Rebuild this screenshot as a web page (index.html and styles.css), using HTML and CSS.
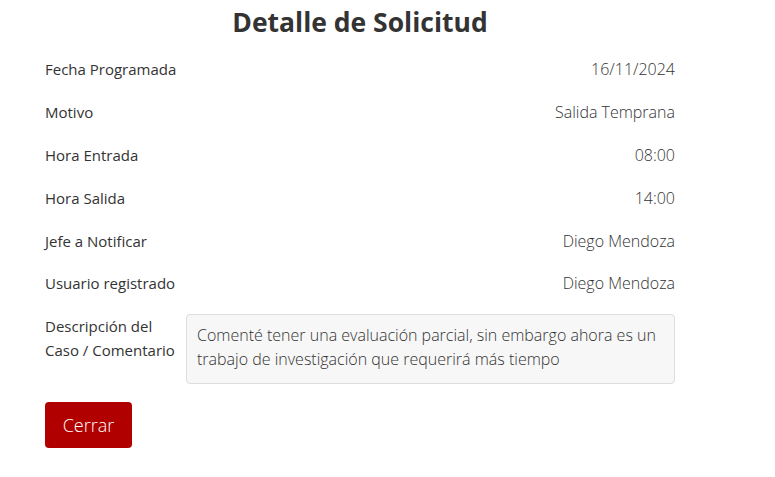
FILE: index.html
```html
<!DOCTYPE html>
<html lang="es">
<head>
<meta charset="utf-8">
<title>Detalle de Solicitud</title>
<link rel="stylesheet" href="styles.css">
</head>
<body>
<div class="panel">
  <h1 class="title">Detalle de Solicitud</h1>
  <div class="rows">
    <div class="row"><span class="label">Fecha Programada</span><span class="value">16/11/2024</span></div>
    <div class="row"><span class="label">Motivo</span><span class="value">Salida Temprana</span></div>
    <div class="row"><span class="label">Hora Entrada</span><span class="value">08:00</span></div>
    <div class="row"><span class="label">Hora Salida</span><span class="value">14:00</span></div>
    <div class="row"><span class="label">Jefe a Notificar</span><span class="value">Diego Mendoza</span></div>
    <div class="row"><span class="label">Usuario registrado</span><span class="value">Diego Mendoza</span></div>
    <div class="row desc-row">
      <span class="label desc-label">Descripción del Caso / Comentario</span>
      <div class="desc-box">Comenté tener una evaluación parcial, sin embargo ahora es un trabajo de investigación que requerirá más tiempo</div>
    </div>
  </div>
  <button class="btn-close" type="button">Cerrar</button>
</div>
</body>
</html>
```
FILE: styles.css
```css
html, body {
  margin: 0;
  padding: 0;
  background: #ffffff;
}
body {
  font-family: "Open Sans", "Noto Sans", sans-serif;
  color: #333333;
}
.panel {
  width: 630px;
  margin-left: 45px;
  padding-top: 5px;
}
.title {
  margin: 0;
  text-align: center;
  font-size: 26.5px;
  font-weight: 700;
  line-height: 34px;
  color: #333333;
}
.rows {
  display: flex;
  flex-direction: column;
  margin-top: 9px;
}
.row {
  display: flex;
  justify-content: space-between;
  align-items: center;
  height: 42.8px;
  font-size: 15px;
}
.label {
  color: #333333;
  font-weight: 400;
}
.value {
  color: #333333;
  font-weight: 300;
  font-size: 16px;
}
.desc-row {
  height: auto;
  align-items: flex-start;
  margin-top: 9px;
  gap: 8px;
}
.desc-label {
  width: 133px;
  line-height: 24px;
  flex-shrink: 0;
}
.desc-box {
  flex: 1;
  background: #f7f7f7;
  border: 1px solid #dddddd;
  border-radius: 4px;
  padding: 8px 10px;
  min-height: 52px;
  line-height: 24px;
  font-size: 16px;
  font-weight: 300;
  color: #333333;
}
.btn-close {
  margin-top: 18px;
  width: 87px;
  height: 46px;
  background: #b00000;
  color: #ffffff;
  border: none;
  border-radius: 4px;
  font-family: inherit;
  font-size: 18px;
  font-weight: 300;
  cursor: pointer;
}
```
